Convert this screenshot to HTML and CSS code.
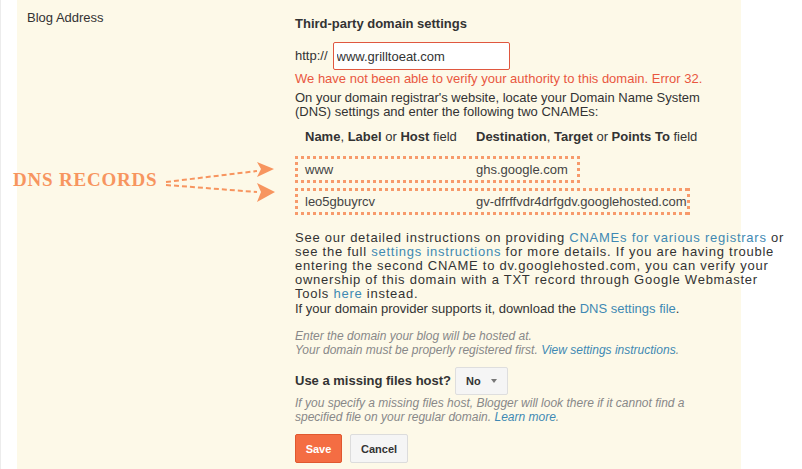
FILE: index.html
```html
<!DOCTYPE html>
<html lang="en">
<head>
  <meta charset="UTF-8" />
  <title>Blog Address settings</title>
  <link rel="stylesheet" href="styles.css">
</head>
<body>
  <div class="page">
    <div class="panel">
      <div class="label">Blog Address</div>
      <div class="settings">
        <div class="title">Third-party domain settings</div>
        <div class="url-row">
          <span class="scheme">http://</span>
          <input type="text" class="url-input" value="www.grilltoeat.com" />
        </div>
        <div class="error">We have not been able to verify your authority to this domain. Error 32.</div>
        <p class="intro">On your domain registrar's website, locate your Domain Name System (DNS) settings and enter the following two CNAMEs:</p>

        <div class="rec-head">
          <span><b>Name</b>, <b>Label</b> or <b>Host</b> field</span>
          <span><b>Destination</b>, <b>Target</b> or <b>Points To</b> field</span>
        </div>
        <div class="rec rec-short">
          <span>www</span>
          <span>ghs.google.com</span>
        </div>
        <div class="rec">
          <span>leo5gbuyrcv</span>
          <span>gv-dfrffvdr4drfgdv.googlehosted.com</span>
        </div>

        <p class="info">
          See our detailed instructions on providing <a href="#">CNAMEs for various registrars</a> or<br>
          see the full <a href="#">settings instructions</a> for more details. If you are having trouble<br>
          entering the second CNAME to dv.googlehosted.com, you can verify your<br>
          ownership of this domain with a TXT record through Google Webmaster<br>
          Tools <a href="#">here</a> instead.
        </p>
        <p class="info-last">If your domain provider supports it, download the <a href="#">DNS settings file</a>.</p>

        <p class="hint">Enter the domain your blog will be hosted at.<br>
          Your domain must be properly registered first. <a href="#">View settings instructions</a>.</p>

        <div class="missing">
          <span class="missing-label">Use a missing files host?</span>
          <button class="select">No <span class="caret"></span></button>
        </div>
        <p class="hint hint-tight">If you specify a missing files host, Blogger will look there if it cannot find a<br>
          specified file on your regular domain. <a href="#">Learn more</a>.</p>

        <div class="actions">
          <button class="btn btn-save">Save</button>
          <button class="btn">Cancel</button>
        </div>
      </div>
    </div>

    <div class="callout">DNS RECORDS</div>
    <svg class="arrows" width="120" height="50" viewBox="160 155 120 50">
      <line x1="165" y1="182" x2="256" y2="171" />
      <line x1="165" y1="185" x2="256" y2="192" />
      <path d="M256 162 L273 169 L256 177 L260 169 Z" />
      <path d="M256 183 L274 192 L256 202 L260 192 Z" />
    </svg>
  </div>
</body>
</html>
```

FILE: styles.css
```css
body {
  margin: 0;
  background-color: #fff;
  font-family: "Liberation Sans", Arial, sans-serif;
  font-size: 13px;
  color: #333;
}
.page {
  position: relative;
  height: 469px;
  padding-left: 16px;
  border-left: 1px solid #ececec;
  overflow: hidden;
}
.panel {
  width: 724px;
  height: 469px;
  box-sizing: border-box;
  padding: 10px 10px 0;
  background-color: #fdf9e8;
  display: grid;
  grid-template-columns: 268px 420px;
  align-items: start;
}
.label {
  line-height: 15px;
}
.settings {
  margin-top: 6px;
  line-height: 14px;
}
.title {
  font-weight: bold;
  line-height: 15px;
}
.url-row {
  display: flex;
  align-items: center;
  gap: 5px;
  margin-top: 11px;
}
.url-input {
  width: 177px;
  height: 28px;
  box-sizing: border-box;
  padding: 0 3px;
  border: 1px solid #e0573f;
  border-radius: 2px;
  font-family: inherit;
  font-size: 13px;
  color: #333;
  background: #fff;
}
.error {
  margin-top: 1px;
  line-height: 15px;
  color: #e9573f;
}
p {
  margin: 0;
}
.intro {
  margin-top: 5px;
}
.rec-head, .rec {
  display: grid;
  grid-template-columns: 171px auto;
}
.rec-head {
  margin-top: 11px;
  padding-left: 10px;
}
.rec {
  width: max-content;
  margin-top: 5px;
  padding: 7px 3px 6px 10px;
  color: #444;
  background:
    repeating-linear-gradient(90deg, #f79a6b 0 3px, transparent 3px 6px) top left / 100% 3px no-repeat,
    repeating-linear-gradient(90deg, #f79a6b 0 3px, transparent 3px 6px) bottom left / 100% 3px no-repeat,
    repeating-linear-gradient(180deg, #f79a6b 0 3px, transparent 3px 6px) top left / 3px 100% no-repeat,
    repeating-linear-gradient(180deg, #f79a6b 0 3px, transparent 3px 6px) top right / 3px 100% no-repeat;
}
.rec-short {
  margin-top: 12px;
  padding-right: 12px;
}
.info {
  margin-top: 16px;
  white-space: nowrap;
  letter-spacing: 0.75px;
}
.info-last {
  margin-top: 1px;
}
a {
  color: #3f89b3;
  text-decoration: none;
}
.hint {
  margin-top: 13px;
  font-size: 12px;
  font-style: italic;
  color: #888;
}
.hint-tight {
  margin-top: 1px;
  white-space: nowrap;
}
.missing {
  display: flex;
  align-items: center;
  gap: 4px;
  margin-top: 10px;
}
.missing-label {
  font-weight: bold;
}
.select {
  height: 28px;
  padding: 0 10px;
  border: 1px solid #dedede;
  border-radius: 2px;
  background: #f5f5f5;
  font-family: inherit;
  font-size: 11px;
  font-weight: bold;
  color: #333;
  display: flex;
  align-items: center;
  gap: 10px;
}
.caret {
  width: 0;
  height: 0;
  border-left: 3.5px solid transparent;
  border-right: 3.5px solid transparent;
  border-top: 4px solid #777;
}
.actions {
  display: flex;
  gap: 8px;
  margin-top: 10px;
}
.btn {
  height: 29px;
  padding: 0 10px;
  border: 1px solid #dcdcdc;
  border-radius: 2px;
  background: #f5f5f5;
  font-family: inherit;
  font-size: 11px;
  font-weight: bold;
  color: #333;
}
.btn-save {
  width: 47px;
  padding: 0;
  border-color: #e0582f;
  background: #f46d43;
  color: #fff;
}
.callout {
  position: absolute;
  left: 12px;
  top: 169px;
  font-family: "Liberation Serif", "Times New Roman", serif;
  font-size: 19px;
  font-weight: bold;
  letter-spacing: 0.8px;
  color: #f7955f;
}
.arrows {
  position: absolute;
  left: 160px;
  top: 155px;
}
.arrows line {
  stroke: #f7955f;
  stroke-width: 2;
  stroke-dasharray: 5 3;
}
.arrows path {
  fill: #f7955f;
}
```
